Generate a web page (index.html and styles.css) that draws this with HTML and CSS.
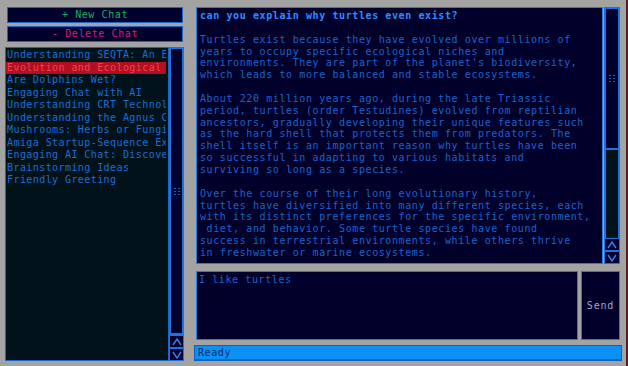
FILE: index.html
```html
<!DOCTYPE html>
<html lang="en">
<head>
    <meta charset="UTF-8">
    <meta name="viewport" content="width=device-width, initial-scale=1.0">
    <title>Chat</title>
    <link rel="stylesheet" href="styles.css">
</head>
<body>
    <div class="app">
        <div class="sidebar">
            <button class="btn btn-new">+ New Chat</button>
            <button class="btn btn-delete">- Delete Chat</button>

            <div class="list-wrap">
                <ul class="chat-list">
                    <li>Understanding SEQTA: An Educational Platform</li>
                    <li class="selected">Evolution and Ecological Niches</li>
                    <li>Are Dolphins Wet?</li>
                    <li>Engaging Chat with AI</li>
                    <li>Understanding CRT Technology</li>
                    <li>Understanding the Agnus Chip</li>
                    <li>Mushrooms: Herbs or Fungi?</li>
                    <li>Amiga Startup-Sequence Explained</li>
                    <li>Engaging AI Chat: Discovering</li>
                    <li>Brainstorming Ideas</li>
                    <li>Friendly Greeting</li>
                </ul>
                <div class="scrollbar">
                    <div class="thumb">
                        <svg class="grip" width="6" height="7" viewBox="0 0 6 7"><rect x="0" y="0" width="2" height="1"/><rect x="4" y="0" width="2" height="1"/><rect x="0" y="3" width="2" height="1"/><rect x="4" y="3" width="2" height="1"/><rect x="0" y="6" width="2" height="1"/><rect x="4" y="6" width="2" height="1"/></svg>
                    </div>
                    <div class="arrow"><svg width="10" height="8" viewBox="0 0 10 8"><polyline points="1,7 5,1 9,7"/></svg></div>
                    <div class="arrow"><svg width="10" height="8" viewBox="0 0 10 8"><polyline points="1,1 5,7 9,1"/></svg></div>
                </div>
            </div>
        </div>

        <div class="main">
            <div class="top-row">
                <div class="chat-panel">
                    <div class="question">can you explain why turtles even exist?</div>
<div class="answer">Turtles exist because they have evolved over millions of
years to occupy specific ecological niches and
environments. They are part of the planet's biodiversity,
which leads to more balanced and stable ecosystems.

About 220 million years ago, during the late Triassic
period, turtles (order Testudines) evolved from reptilian
ancestors, gradually developing their unique features such
as the hard shell that protects them from predators. The
shell itself is an important reason why turtles have been
so successful in adapting to various habitats and
surviving so long as a species.

Over the course of their long evolutionary history,
turtles have diversified into many different species, each
with its distinct preferences for the specific environment,
 diet, and behavior. Some turtle species have found
success in terrestrial environments, while others thrive
in freshwater or marine ecosystems.</div>
                </div>
                <div class="scrollbar main-scroll">
                    <div class="thumb short">
                        <svg class="grip" width="6" height="7" viewBox="0 0 6 7"><rect x="0" y="0" width="2" height="1"/><rect x="4" y="0" width="2" height="1"/><rect x="0" y="3" width="2" height="1"/><rect x="4" y="3" width="2" height="1"/><rect x="0" y="6" width="2" height="1"/><rect x="4" y="6" width="2" height="1"/></svg>
                    </div>
                    <div class="track"></div>
                    <div class="arrow"><svg width="10" height="8" viewBox="0 0 10 8"><polyline points="1,7 5,1 9,7"/></svg></div>
                    <div class="arrow"><svg width="10" height="8" viewBox="0 0 10 8"><polyline points="1,1 5,7 9,1"/></svg></div>
                </div>
            </div>

            <div class="input-row">
                <div class="input">I like turtles</div>
                <button class="send">Send</button>
            </div>

            <div class="status">Ready</div>
        </div>
    </div>
</body>
</html>
```

FILE: styles.css
```css
body {
    margin: 0;
    background: #a3a3a3;
    font-family: "DejaVu Sans Mono", "Liberation Mono", monospace;
    font-size: 10px;
    letter-spacing: 0.6px;
}

.app {
    display: flex;
    width: 628px;
    height: 366px;
    padding: 7px 0 5px 5px;
    box-sizing: border-box;
    border-right: 2px solid #6a1420;
}

/* Left column */

.sidebar {
    width: 179px;
    display: flex;
    flex-direction: column;
}

.btn {
    height: 16px;
    margin: 0 1px 3px 2px;
    padding: 0;
    background: #00002c;
    border: 1px solid #1d64c4;
    font-family: inherit;
    font-size: 10px;
    letter-spacing: 0.6px;
    line-height: 14px;
    text-align: center;
}

.btn-new {
    color: #17b060;
}

.btn-delete {
    color: #d41c7c;
    margin-bottom: 5px;
}

.list-wrap {
    flex: 1;
    display: flex;
    min-height: 0;
}

.chat-list {
    flex: 1;
    margin: 0;
    padding: 1px 0 0 0;
    list-style: none;
    background: #02121a;
    border: 1px solid #1d64c4;
    overflow: hidden;
}

.chat-list li {
    height: 12.5px;
    line-height: 12.5px;
    padding-left: 1px;
    margin-right: 2px;
    color: #1c6ed6;
    letter-spacing: 0.42px;
    white-space: nowrap;
    overflow: hidden;
}

.chat-list li.selected {
    background: #b3101f;
    color: #f0405a;
}

/* Scrollbars */

.scrollbar {
    width: 15px;
    display: flex;
    flex-direction: column;
}

.thumb {
    flex: 1;
    background: #00002c;
    border: 2px solid #1b72e0;
    display: flex;
    align-items: center;
    justify-content: center;
}

.thumb.short {
    flex: none;
    height: 139px;
}

.track {
    flex: 1;
    background: #02121a;
    border-left: 2px solid #1b72e0;
    border-right: 2px solid #1b72e0;
}

.grip rect {
    fill: #1b5fb8;
}

.arrow {
    height: 11px;
    background: #00002c;
    border: 1px solid #1b72e0;
    display: flex;
    align-items: center;
    justify-content: center;
}

.arrow svg polyline {
    fill: none;
    stroke: #2a86f0;
    stroke-width: 1.4;
}

/* Right column */

.main {
    width: 428px;
    margin-left: 10px;
    display: flex;
    flex-direction: column;
}

.top-row {
    height: 257px;
    margin: 0 2px;
    display: flex;
    gap: 1px;
}

.main-scroll {
    width: 16px;
}

.chat-panel {
    flex: 1;
    background: #00002a;
    border: 1px solid #2a7ad8;
    padding: 2px 3px;
    overflow: hidden;
    line-height: 11.85px;
}

.question {
    color: #2c8cff;
    font-weight: bold;
    margin-bottom: 11.85px;
}

.answer {
    color: #1a64cc;
    white-space: pre;
}

.input-row {
    height: 69px;
    margin: 7px 2px 0 2px;
    display: flex;
    gap: 3px;
}

.input {
    flex: 1;
    background: #00002a;
    border: 1px solid #2a7ad8;
    padding: 2px 2px;
    line-height: 12px;
    color: #1a64cc;
}

.send {
    width: 39px;
    padding: 0;
    background: #00002a;
    border: 1px solid #2a7ad8;
    color: #a6a6cc;
    font-family: inherit;
    font-size: 10px;
    letter-spacing: 0.8px;
}

.status {
    height: 16px;
    margin-top: 5px;
    box-sizing: border-box;
    background: #0b91f6;
    border: 1px solid #0a62c4;
    border-bottom-width: 2px;
    padding-left: 3px;
    line-height: 13px;
    color: #002a70;
}
```
